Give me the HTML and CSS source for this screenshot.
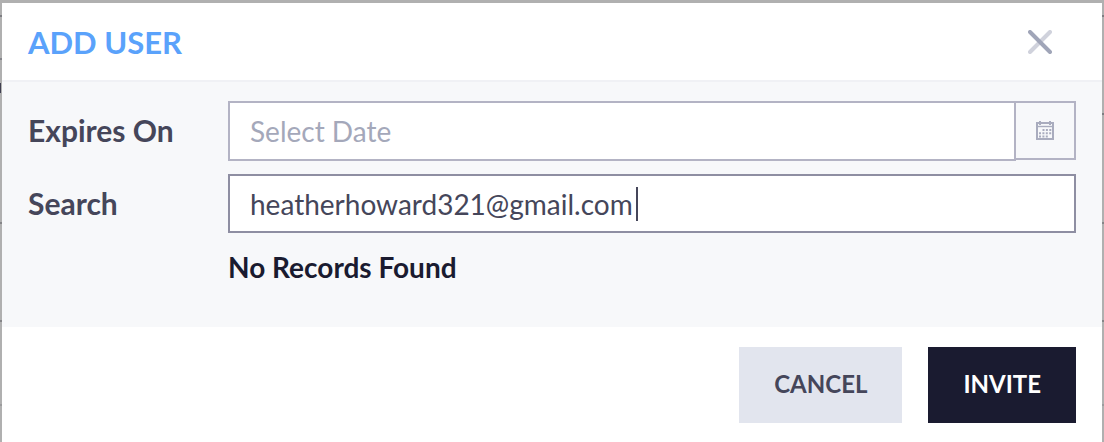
FILE: index.html
```html
<!DOCTYPE html>
<html lang="en">
<head>
<meta charset="utf-8">
<meta name="viewport" content="width=device-width, initial-scale=1">
<title>Add User</title>
<link rel="stylesheet" href="styles.css">
</head>
<body>
<main class="backdrop">
  <form class="modal" role="dialog" aria-labelledby="title">
    <header class="modal-header">
      <h1 class="title" id="title">ADD USER</h1>
      <button class="close" type="button" aria-label="Close">
        <svg width="24" height="24" viewBox="0 0 24 24" fill="none" stroke-width="4" stroke-linecap="round">
          <path d="M22 2L2 22" stroke="#d0d2dc"/>
          <path d="M2 2l20 20" stroke="#a0a5b8"/>
        </svg>
      </button>
    </header>
    <div class="modal-body">
      <div class="row">
        <label class="label" for="expires">Expires On</label>
        <div class="date-field">
          <input class="input date-input" id="expires" type="text" placeholder="Select Date">
          <button class="date-button" type="button" aria-label="Open calendar">
            <svg width="18" height="20" viewBox="0 0 18 20" fill="none" stroke="#a9acbe">
              <path d="M1 2h16v16H1z" stroke-width="2"/>
              <path d="M1 5.500h16" stroke-width="1.400"/>
              <path d="M4 0v4M14 0v4" stroke-width="2"/>
              <path d="M6.500 9H16M3 12.300H16M3 15.500H12.500" stroke-width="2" stroke-dasharray="2 1.400"/>
            </svg>
          </button>
        </div>
      </div>
      <div class="row">
        <label class="label" for="search">Search</label>
        <div class="search-field">
          <input class="input search-input" id="search" type="text" value="heatherhoward321@gmail.com">
          <span class="caret"></span>
        </div>
      </div>
      <p class="message">No Records Found</p>
    </div>
    <footer class="modal-footer">
      <button class="button cancel" type="button">CANCEL</button>
      <button class="button invite" type="submit">INVITE</button>
    </footer>
  </form>
</main>
</body>
</html>
```
FILE: styles.css
```css
* {
  box-sizing: border-box;
}

body {
  margin: 0;
  font-family: Lato, "Open Sans", sans-serif;
  color: #45465a;
}

.backdrop {
  display: flex;
  min-height: 100vh;
  padding: 3px 2px 0;
  background:
    linear-gradient(#7d7d82, #7d7d82) 0 15px / 100% 2px no-repeat,
    linear-gradient(#85858a, #85858a) 0 58px / 2px 2px no-repeat,
    linear-gradient(#3f3f50, #3f3f50) 0 83px / 1px 10px no-repeat,
    linear-gradient(#7d7d82, #7d7d82) 100% 113px / 2px 2px no-repeat,
    linear-gradient(#858588, #858588) 0 222px / 100% 2px no-repeat,
    linear-gradient(#858588, #858588) 0 320px / 100% 2px no-repeat,
    linear-gradient(#9b9b9d, #9b9b9d) 0 404px / 100% 2px no-repeat,
    #b0b0b0;
}

.modal {
  display: flex;
  flex: 1;
  flex-direction: column;
  background: #fff;
}

.modal-header {
  display: flex;
  align-items: center;
  justify-content: space-between;
  padding: 18px 50px 18px 26px;
  border-bottom: 2px solid #f0f1f5;
}

.title {
  margin: 0;
  padding-top: 2px;
  font-size: 31px;
  font-weight: 700;
  line-height: 39px;
  color: #5aa2fb;
}

.close {
  display: flex;
  padding: 0;
  border: 0;
  background: none;
}

.modal-body {
  display: flex;
  flex-direction: column;
  gap: 13px;
  padding: 19px 26px 42px;
  background: #f7f8fa;
}

.row {
  display: grid;
  grid-template-columns: 200px 1fr;
  align-items: center;
}

.label {
  padding-bottom: 2px;
  font-size: 30px;
  font-weight: 700;
  line-height: 36px;
}

.date-field {
  display: flex;
  align-items: flex-start;
}

.input {
  width: 100%;
  min-width: 0;
  height: 60px;
  padding: 0 20px;
  border: 2px solid #b3b3c4;
  border-radius: 0;
  outline: 0;
  background: #fff;
  font: 400 28px/36px Lato, "Open Sans", sans-serif;
  color: #45465a;
}

.input::placeholder {
  color: #a4a8ba;
  opacity: 1;
}

.date-button {
  display: flex;
  flex: none;
  align-items: center;
  justify-content: center;
  width: 60px;
  height: 59px;
  padding: 0;
  border: 2px solid #b3b3c4;
  border-left: 0;
  background: none;
}

.search-field {
  position: relative;
}

.search-input {
  display: block;
  height: 59px;
  border-color: #8e8ea2;
}

.caret {
  position: absolute;
  top: 13px;
  left: 408px;
  width: 2px;
  height: 34px;
  background: #45465a;
  pointer-events: none;
}

.message {
  margin: 3px 0 0 200px;
  font-size: 28px;
  font-weight: 700;
  line-height: 36px;
  color: #1a1b30;
}

.modal-footer {
  display: flex;
  justify-content: flex-end;
  gap: 26px;
  padding: 20px 26px 19px;
}

.button {
  height: 76px;
  padding: 0 35px 2px;
  border: 0;
  font: 700 24px/30px Lato, "Open Sans", sans-serif;
}

.cancel {
  background: #e2e5ee;
  color: #45465a;
}

.invite {
  background: #1a1b30;
  color: #fff;
}
```
